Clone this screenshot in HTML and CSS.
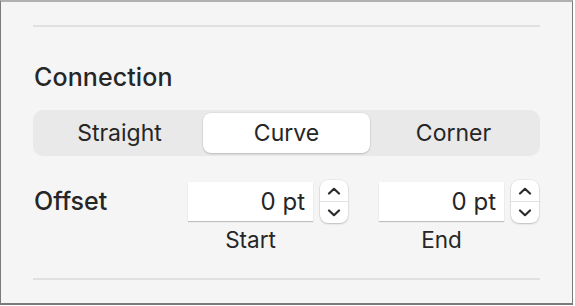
FILE: index.html
```html
<!DOCTYPE html>
<html>
<head>
    <meta charset="UTF-8">
    <title>Connection</title>
    <link rel="stylesheet" href="styles.css">
</head>
<body>
    <div class="panel">
        <div class="rule"></div>
        <h3 class="section-title">Connection</h3>
        <div class="segmented">
            <button class="segment">Straight</button>
            <button class="segment selected">Curve</button>
            <button class="segment">Corner</button>
        </div>
        <div class="offset-row">
            <div class="row-label">Offset</div>
            <div class="fields">
                <div class="field">
                    <div class="value-box">0 pt</div>
                    <div class="stepper">
                        <span class="step up">
                            <svg width="14" height="8" viewBox="0 0 14 8"><path d="M2 6.5 L7 1.8 L12 6.5" fill="none" stroke="#2b2b2b" stroke-width="2.2" stroke-linecap="round" stroke-linejoin="round"/></svg>
                        </span>
                        <span class="step down">
                            <svg width="14" height="8" viewBox="0 0 14 8"><path d="M2 1.5 L7 6.2 L12 1.5" fill="none" stroke="#2b2b2b" stroke-width="2.2" stroke-linecap="round" stroke-linejoin="round"/></svg>
                        </span>
                    </div>
                    <div class="field-caption">Start</div>
                </div>
                <div class="field">
                    <div class="value-box">0 pt</div>
                    <div class="stepper">
                        <span class="step up">
                            <svg width="14" height="8" viewBox="0 0 14 8"><path d="M2 6.5 L7 1.8 L12 6.5" fill="none" stroke="#2b2b2b" stroke-width="2.2" stroke-linecap="round" stroke-linejoin="round"/></svg>
                        </span>
                        <span class="step down">
                            <svg width="14" height="8" viewBox="0 0 14 8"><path d="M2 1.5 L7 6.2 L12 1.5" fill="none" stroke="#2b2b2b" stroke-width="2.2" stroke-linecap="round" stroke-linejoin="round"/></svg>
                        </span>
                    </div>
                    <div class="field-caption">End</div>
                </div>
            </div>
        </div>
        <div class="rule bottom"></div>
    </div>
</body>
</html>
```

FILE: styles.css
```css
body {
    margin: 0;
    background: #ffffff;
    font-family: Inter, "Liberation Sans", sans-serif;
    color: #262626;
}
.panel {
    width: 573px;
    height: 305px;
    box-sizing: border-box;
    background: #f5f5f5;
    border: 1px solid #7a7a7a;
    border-top: 2px solid #b0b0b0;
    border-bottom: 2px solid #7a7a7a;
    padding: 23px 32px 0;
}
.rule {
    height: 2px;
    background: #e0e0e0;
}
.rule.bottom {
    margin-top: 26px;
}
.section-title {
    margin: 35px 0 0 1px;
    font-size: 25px;
    font-weight: 500;
    line-height: 30px;
    letter-spacing: 0.1px;
}
.segmented {
    margin-top: 18px;
    height: 46px;
    box-sizing: border-box;
    padding: 3px;
    background: #e9e9e9;
    border-radius: 10px;
    display: grid;
    grid-template-columns: 1fr 1fr 1fr;
}
.segment {
    border: none;
    background: transparent;
    font-family: inherit;
    font-size: 23px;
    color: #262626;
    border-radius: 8px;
    padding: 0;
}
.segment.selected {
    background: #ffffff;
    box-shadow: 0 1px 2px rgba(0, 0, 0, 0.18), 0 0 0 0.5px rgba(0, 0, 0, 0.06);
}
.offset-row {
    margin-top: 24px;
    display: grid;
    grid-template-columns: 155px auto;
}
.row-label {
    font-size: 25px;
    font-weight: 500;
    line-height: 43px;
    padding-left: 1px;
}
.fields {
    display: flex;
    gap: 31px;
}
.field {
    display: grid;
    grid-template-columns: 125px 28px;
    column-gap: 7px;
    align-items: center;
}
.value-box {
    height: 39px;
    background: #ffffff;
    box-shadow: 0 1px 1px rgba(0, 0, 0, 0.22);
    font-size: 24px;
    line-height: 39px;
    text-align: right;
    padding-right: 8px;
}
.stepper {
    height: 43px;
    background: #ffffff;
    border-radius: 8px;
    box-shadow: 0 1px 2px rgba(0, 0, 0, 0.2), 0 0 0 0.5px rgba(0, 0, 0, 0.08);
    display: flex;
    flex-direction: column;
}
.step {
    flex: 1;
    display: flex;
    align-items: center;
    justify-content: center;
}
.step.up {
    border-bottom: 1px solid #e2e2e2;
}
.field-caption {
    font-size: 22.5px;
    text-align: center;
    line-height: 24px;
    margin-top: 5px;
}
```
